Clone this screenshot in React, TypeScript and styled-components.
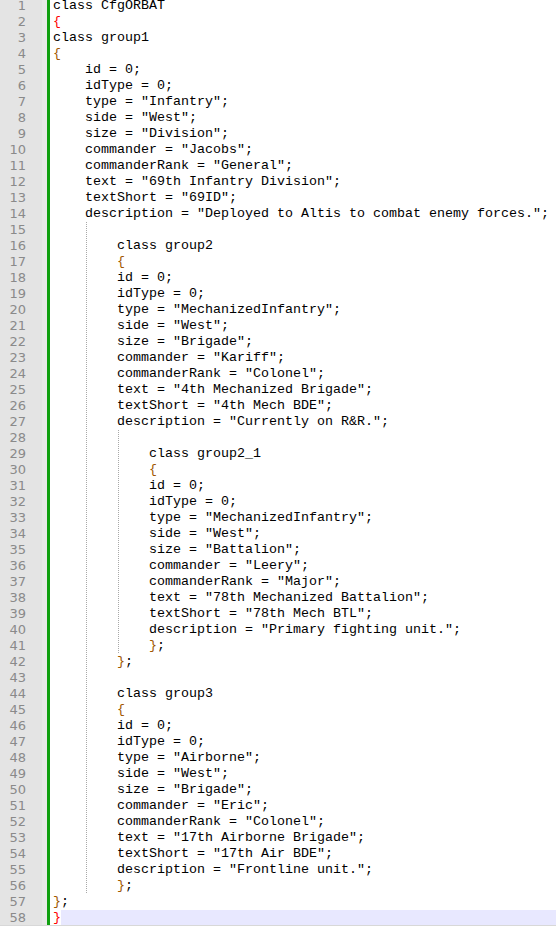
import React from "react";
import styled, { createGlobalStyle } from "styled-components";

const GlobalStyle = createGlobalStyle`
  html, body { margin: 0; padding: 0; background: #ffffff; }
  #root { width: 556px; height: 926px; }
`;

type Line = { text: string; guides?: number[]; match?: boolean; current?: boolean };

const raw: Line[] = [
  { text: "class CfgORBAT" },
  { text: "{", match: true },
  { text: "class group1" },
  { text: "{" },
  { text: "    id = 0;" },
  { text: "    idType = 0;" },
  { text: '    type = "Infantry";' },
  { text: '    side = "West";' },
  { text: '    size = "Division";' },
  { text: '    commander = "Jacobs";' },
  { text: '    commanderRank = "General";' },
  { text: '    text = "69th Infantry Division";' },
  { text: '    textShort = "69ID";' },
  { text: '    description = "Deployed to Altis to combat enemy forces.";' },
  { text: "", guides: [4] },
  { text: "        class group2" },
  { text: "        {" },
  { text: "        id = 0;" },
  { text: "        idType = 0;" },
  { text: '        type = "MechanizedInfantry";' },
  { text: '        side = "West";' },
  { text: '        size = "Brigade";' },
  { text: '        commander = "Kariff";' },
  { text: '        commanderRank = "Colonel";' },
  { text: '        text = "4th Mechanized Brigade";' },
  { text: '        textShort = "4th Mech BDE";' },
  { text: '        description = "Currently on R&R.";' },
  { text: "", guides: [4, 8] },
  { text: "            class group2_1" },
  { text: "            {" },
  { text: "            id = 0;" },
  { text: "            idType = 0;" },
  { text: '            type = "MechanizedInfantry";' },
  { text: '            side = "West";' },
  { text: '            size = "Battalion";' },
  { text: '            commander = "Leery";' },
  { text: '            commanderRank = "Major";' },
  { text: '            text = "78th Mechanized Battalion";' },
  { text: '            textShort = "78th Mech BTL";' },
  { text: '            description = "Primary fighting unit.";' },
  { text: "            };" },
  { text: "        };" },
  { text: "", guides: [4] },
  { text: "        class group3" },
  { text: "        {" },
  { text: "        id = 0;" },
  { text: "        idType = 0;" },
  { text: '        type = "Airborne";' },
  { text: '        side = "West";' },
  { text: '        size = "Brigade";' },
  { text: '        commander = "Eric";' },
  { text: '        commanderRank = "Colonel";' },
  { text: '        text = "17th Airborne Brigade";' },
  { text: '        textShort = "17th Air BDE";' },
  { text: '        description = "Frontline unit.";' },
  { text: "        };" },
  { text: "};" },
  { text: "}", match: true, current: true },
];

function guidesFor(line: Line): number[] {
  if (line.guides) return line.guides;
  const indent = line.text.length - line.text.trimStart().length;
  const g: number[] = [];
  for (let c = 4; c < indent; c += 4) g.push(c);
  return g;
}

const Editor = styled.div`
  width: 556px;
  height: 926px;
  display: flex;
  flex-direction: column;
  overflow: hidden;
  background: #ffffff;
`;

const Viewport = styled.div`
  flex: 1;
  overflow: hidden;
`;

const Lines = styled.div`
  display: flex;
  flex-direction: column;
  margin-top: -2px;
`;

const Row = styled.div`
  display: flex;
  height: 16px;
`;

const LineNumber = styled.div`
  width: 42px;
  box-sizing: border-box;
  padding-right: 16px;
  background: #e4e4e4;
  color: #8a8a8a;
  font-family: "DejaVu Sans", Verdana, sans-serif;
  font-size: 13px;
  line-height: 16px;
  text-align: right;
`;

const FoldMargin = styled.div`
  width: 5px;
  background: #e9e9e9;
`;

const ChangeBar = styled.div`
  width: 3px;
  background: #10a010;
`;

const Pad = styled.div`
  width: 3px;
  background: #ffffff;
`;

const Code = styled.div<{ $current?: boolean }>`
  flex: 1;
  position: relative;
  white-space: pre;
  font-family: "Liberation Mono", "Courier New", monospace;
  font-size: 13.333px;
  line-height: 16px;
  color: #000000;
  background: ${(p) => (p.$current ? "#e8e8ff" : "#ffffff")};
`;

const Guide = styled.span<{ $col: number }>`
  position: absolute;
  top: 0;
  bottom: 0;
  left: ${(p) => p.$col * 8 + 1}px;
  width: 1px;
  background: repeating-linear-gradient(
    to bottom,
    #a8a8a8 0px,
    #a8a8a8 1px,
    transparent 1px,
    transparent 2px
  );
`;

const Brace = styled.span`
  color: #a05800;
`;

const MatchBrace = styled.span`
  color: #ff0000;
  background: #ffffff;
`;

const BottomRule = styled.div`
  height: 1px;
  background: #d8d8d8;
`;

function renderCode(line: Line) {
  if (line.match) return <MatchBrace>{line.text}</MatchBrace>;
  const parts = line.text.split(/([{}])/);
  return parts.map((p, i) =>
    p === "{" || p === "}" ? <Brace key={i}>{p}</Brace> : <React.Fragment key={i}>{p}</React.Fragment>
  );
}

export default function App() {
  return (
    <>
      <GlobalStyle />
      <Editor>
        <Viewport>
          <Lines>
            {raw.map((line, i) => (
              <Row key={i}>
                <LineNumber>{i + 1}</LineNumber>
                <FoldMargin />
                <ChangeBar />
                <Pad />
                <Code $current={line.current}>
                  {guidesFor(line).map((c) => (
                    <Guide key={c} $col={c} />
                  ))}
                  {renderCode(line)}
                </Code>
              </Row>
            ))}
          </Lines>
        </Viewport>
        <BottomRule />
      </Editor>
    </>
  );
}
